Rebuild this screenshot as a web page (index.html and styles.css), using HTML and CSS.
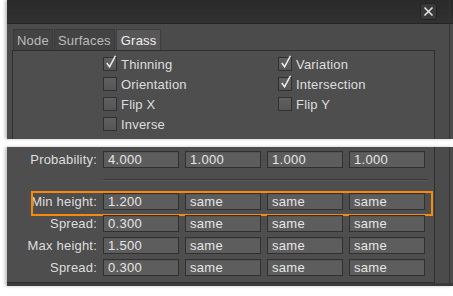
FILE: index.html
```html
<!DOCTYPE html>
<html lang="en">
<head>
  <meta charset="UTF-8">
  <title>Grass settings</title>
  <link rel="stylesheet" href="styles.css">
</head>
<body>
  <div class="shot shot-top">
    <header class="titlebar">
      <button class="close-btn" aria-label="Close">
        <svg width="11" height="11" viewBox="0 0 11 11"><path d="M1.5 1.5 L9.5 9.5 M9.5 1.5 L1.5 9.5" stroke="#e4e4e4" stroke-width="1.6" fill="none"/></svg>
      </button>
    </header>

    <nav class="tabs">
      <span class="tab">Node</span>
      <span class="tab">Surfaces</span>
      <span class="tab active">Grass</span>
    </nav>

    <section class="group">
      <div class="checks">
        <label class="check on"><i class="box"></i>Thinning</label>
        <label class="check on"><i class="box"></i>Variation</label>
        <label class="check"><i class="box"></i>Orientation</label>
        <label class="check on"><i class="box"></i>Intersection</label>
        <label class="check"><i class="box"></i>Flip X</label>
        <label class="check"><i class="box"></i>Flip Y</label>
        <label class="check"><i class="box"></i>Inverse</label>
      </div>
      <div class="cut-field"></div>
    </section>
  </div>

  <div class="tear"></div>

  <div class="shot shot-bottom">
    <section class="group group-cont">
      <div class="row">
        <span class="lbl">Probability:</span>
        <span class="field">4.000</span>
        <span class="field">1.000</span>
        <span class="field">1.000</span>
        <span class="field">1.000</span>
      </div>
      <div class="sep"></div>
      <div class="row highlight">
        <span class="lbl">Min height:</span>
        <span class="field">1.200</span>
        <span class="field">same</span>
        <span class="field">same</span>
        <span class="field">same</span>
      </div>
      <div class="row">
        <span class="lbl">Spread:</span>
        <span class="field">0.300</span>
        <span class="field">same</span>
        <span class="field">same</span>
        <span class="field">same</span>
      </div>
      <div class="row">
        <span class="lbl">Max height:</span>
        <span class="field">1.500</span>
        <span class="field">same</span>
        <span class="field">same</span>
        <span class="field">same</span>
      </div>
      <div class="row">
        <span class="lbl">Spread:</span>
        <span class="field">0.300</span>
        <span class="field">same</span>
        <span class="field">same</span>
        <span class="field">same</span>
      </div>
    </section>
  </div>
</body>
</html>
```

FILE: styles.css
```css
:root {
  --panel: #4b4b4b;
  --group: #4e4e4e;
  --line: #2e2e2e;
  --text: #dedede;
  --field: #5d5d5d;
  --accent: #f7890c;
}

* {
  margin: 0;
  padding: 0;
  box-sizing: border-box;
}

body {
  background: #ffffff;
  font-family: 'Liberation Sans', Arial, sans-serif;
  font-size: 13px;
  color: var(--text);
  width: 453px;
  height: 296px;
  overflow: hidden;
}

.shot {
  margin-left: 7px;
  background: var(--panel);
  box-shadow: -2px 0 3px rgba(0, 0, 0, 0.25);
  overflow: hidden;
  position: relative;
}

/* thin scrollbar rail on the right edge */
.shot::after {
  content: '';
  position: absolute;
  top: 0;
  bottom: 0;
  right: 3px;
  width: 1px;
  background: #343434;
}

.shot-top {
  height: 139px;
}

.tear {
  height: 8px;
  background: #ffffff;
}

.shot-bottom {
  height: 139px;
  border-bottom: 3px solid #3a3a3a;
}

/* title bar */
.titlebar {
  height: 24px;
  background: linear-gradient(#2a2a2a, #313131);
  border-bottom: 1px solid #242424;
  display: flex;
  justify-content: flex-end;
  align-items: center;
  padding-right: 16px;
}

.close-btn {
  width: 17px;
  height: 17px;
  background: #3a3a3a;
  border: 1px solid #222;
  border-radius: 3px;
  display: flex;
  align-items: center;
  justify-content: center;
}

/* tabs */
.tabs {
  display: flex;
  gap: 1px;
  margin: 5px 0 0 6px;
  height: 21px;
}

.tab {
  padding: 3px 3px 0;
  background: #434343;
  color: #bcbcbc;
  border: 1px solid #3a3a3a;
  border-bottom: none;
  letter-spacing: 0.2px;
}

.tab.active {
  background: #575757;
  color: #f0f0f0;
  border-color: #3c3c3c;
  padding: 3px 4px 0;
}

/* group box */
.group {
  margin: 0 18px 0 5px;
  background: var(--group);
  border: 1px solid var(--line);
  height: 200px;
}

.group-cont {
  border-top: none;
  border-left: none;
  margin-left: 0;
  height: 100%;
  padding: 4px 0 0;
  position: relative;
}

.checks {
  display: grid;
  grid-template-columns: 175px 150px;
  grid-auto-rows: 20px;
  padding: 3px 0 0 90px;
}

.check {
  display: flex;
  align-items: center;
  gap: 4px;
  letter-spacing: 0.2px;
}

.box {
  width: 14px;
  height: 14px;
  border: 1px solid #303030;
  background: linear-gradient(#606060, #555);
  position: relative;
}

.check.on .box::after {
  content: '';
  position: absolute;
  left: 2px;
  top: -3px;
  width: 10px;
  height: 14px;
  background: no-repeat center / contain url("data:image/svg+xml,%3Csvg xmlns='http://www.w3.org/2000/svg' viewBox='0 0 10 14'%3E%3Cpath d='M0.8 8 L3.6 11.8 L9.4 0.8' stroke='%23ededed' stroke-width='1.5' fill='none'/%3E%3C/svg%3E");
}

.cut-field {
  margin: 7px 0 0 90px;
  width: 168px;
  height: 20px;
  border: 1px solid #2e2e2e;
  background: #575757;
}

/* value rows */
.row {
  display: flex;
  align-items: center;
  gap: 6px;
  height: 17px;
  margin-bottom: 5px;
  position: relative;
}

.lbl {
  width: 90px;
  text-align: right;
  letter-spacing: 0.2px;
}

.field {
  width: 76px;
  height: 17px;
  background: var(--field);
  border: 1px solid #303030;
  box-shadow: inset 0 1px 0 #555;
  padding-left: 4px;
  line-height: 15px;
  color: #e6e6e6;
  letter-spacing: 0.3px;
}

.sep {
  margin: 11px 0 12px 96px;
  width: 325px;
  height: 2px;
  border-top: 1px solid #383838;
  border-bottom: 1px solid #5a5a5a;
}

.row.highlight::before {
  content: '';
  position: absolute;
  left: 24px;
  top: -2px;
  width: 398px;
  height: 21px;
  border: 2px solid var(--accent);
}
```
